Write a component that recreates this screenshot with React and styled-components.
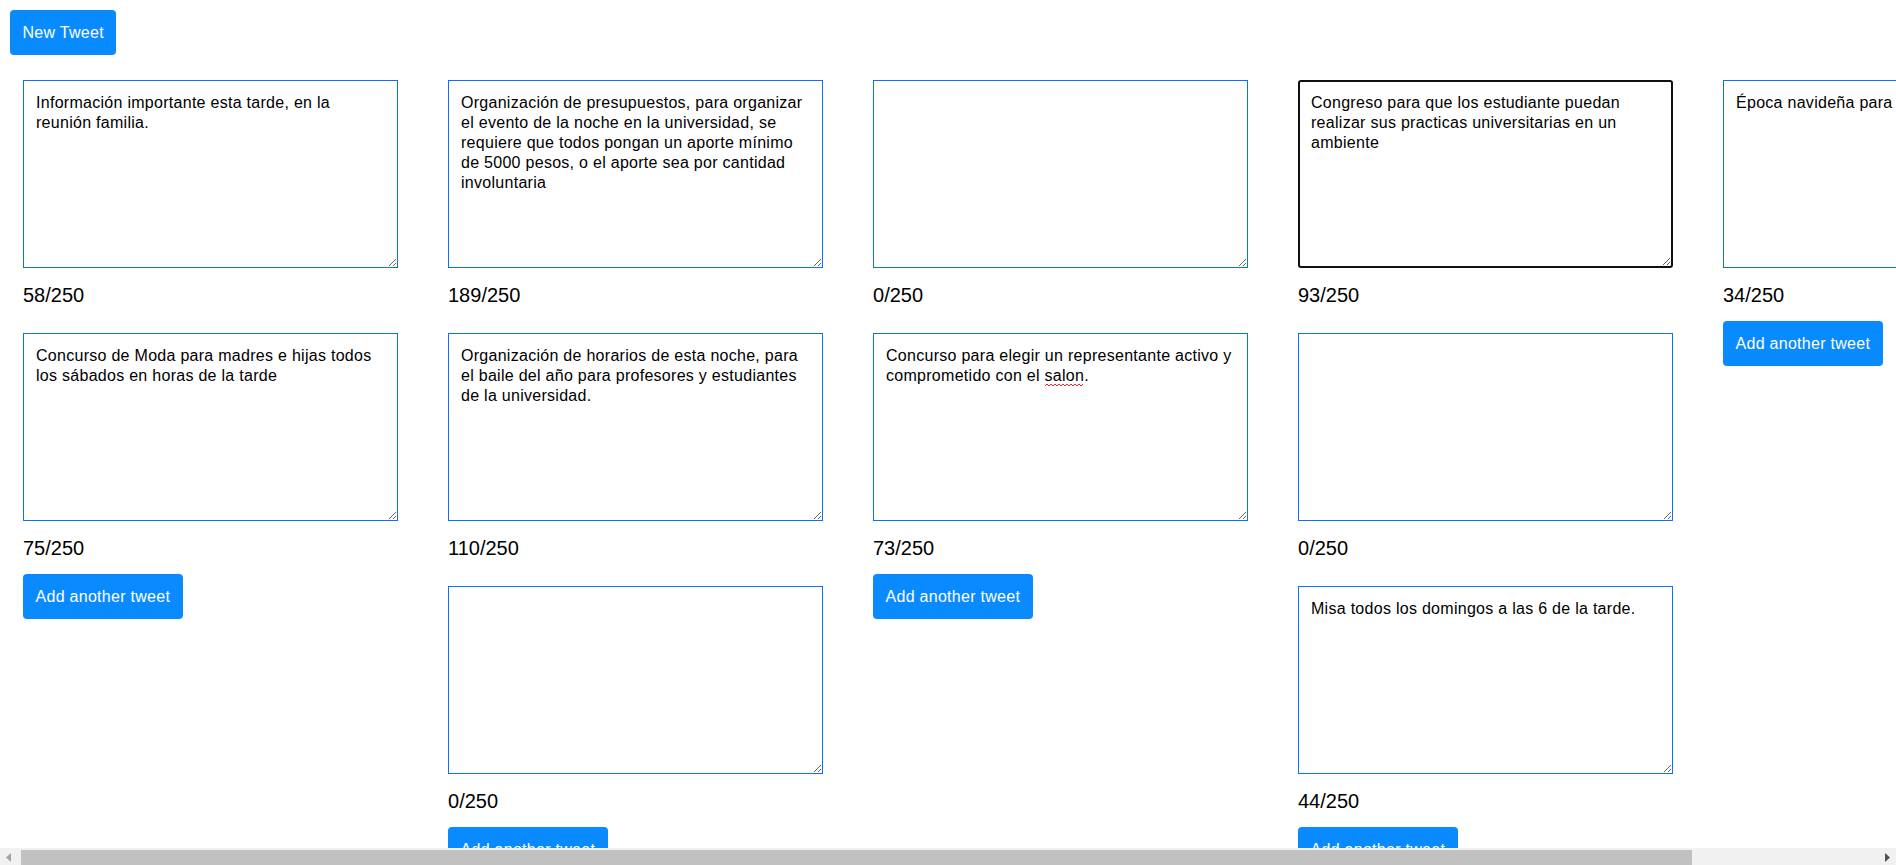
import { useLayoutEffect, useRef, useState } from "react";
import styled, { createGlobalStyle, css } from "styled-components";

const GlobalStyle = createGlobalStyle`
  html, body {
    margin: 0;
    height: 100%;
  }
  body {
    font-family: "Liberation Sans", Arial, sans-serif;
    background-color: #ffffff;
    color: #000000;
    overflow: hidden;
  }
  #root {
    height: 100%;
  }
`;

const Page = styled.div`
  height: 100vh;
  display: flex;
  flex-direction: column;
`;
const Header = styled.header`
  flex: none;
  padding: 10px 10px 0;
  display: flex;
`;
const BlueButton = styled.button`
  flex: none;
  height: 45px;
  padding: 0 12.5px;
  border: none;
  border-radius: 4px;
  background-color: #0a8aff;
  color: #ffffff;
  font-family: "Liberation Sans", Arial, sans-serif;
  font-size: 16px;
  letter-spacing: 0.28px;
  white-space: nowrap;
  cursor: pointer;
`;
const Board = styled.main`
  flex: 1;
  min-height: 0;
  display: flex;
  align-items: flex-start;
  gap: 50px;
  padding: 25px 10px 0 23px;
  overflow-x: auto;
  overflow-y: hidden;
  scrollbar-width: none;

  &::-webkit-scrollbar {
    display: none;
  }
`;
const ScrollBar = styled.div`
  flex: none;
  height: 17px;
  display: flex;
  background-color: #f1f1f1;
`;
const ScrollArrow = styled.div`
  flex: none;
  width: 17px;
  display: flex;
  align-items: center;
  justify-content: center;
  padding-top: 2px;
  color: ${({ $disabled }) => ($disabled ? "#a3a3a3" : "#505050")};
`;
const ScrollTrack = styled.div`
  flex: 1;
  min-width: 0;
  display: flex;
  padding-left: 4px;
`;
const ScrollThumb = styled.div`
  height: 15px;
  margin-top: 2px;
  background-color: #c1c1c1;
`;
const Column = styled.section`
  flex: none;
  width: 375px;
  display: flex;
  flex-direction: column;
  align-items: flex-start;
`;
const Card = styled.div`
  position: relative;
  width: 100%;

  & + & {
    margin-top: 12px;
  }
`;
const TweetInput = styled.textarea`
  display: block;
  box-sizing: border-box;
  width: 375px;
  height: 188px;
  margin: 0;
  padding: 12px;
  border: 1px solid #0d6efd;
  border-radius: 0;
  background-color: #ffffff;
  color: #000000;
  font-family: "Liberation Sans", Arial, sans-serif;
  font-size: 16px;
  line-height: 20px;
  letter-spacing: 0.28px;
  outline: none;
  resize: both;

  ${({ $focused }) =>
    $focused &&
    css`
      border: 2px solid #101010;
      border-radius: 3px;
      padding: 11px;
    `}
`;
const Counter = styled.p`
  margin: 16px 0 14px;
  font-size: 20px;
  line-height: 23px;
`;
const Squiggle = styled.svg`
  position: absolute;
  left: ${({ $left }) => $left}px;
  top: ${({ $top }) => $top}px;
  pointer-events: none;
`;

// zigzag under a misspelled word, like the browser's spell check
const SpellMark = ({ left, top, width }) => {
  let d = "M0 3";
  for (let x = 2; x <= width; x += 2) {
    d += ` L${x} ${(x / 2) % 2 === 1 ? 1 : 3}`;
  }
  return (
    <Squiggle $left={left} $top={top} width={width} height={4} viewBox={`0 0 ${width} 4`}>
      <path d={d} fill="none" stroke="#e5272d" strokeWidth="1" />
    </Squiggle>
  );
};

const Arrow = ({ dir }) => (
  <svg width="5" height="9" viewBox="0 0 5 9">
    <polygon
      points={dir === "left" ? "5,0 0,4.5 5,9" : "0,0 5,4.5 0,9"}
      fill="currentColor"
    />
  </svg>
);

const initialColumns = [
  [
    { text: "Información importante esta tarde, en la reunión familia. " },
    { text: "Concurso de Moda para madres e hijas todos los sábados en horas de la tarde" },
  ],
  [
    {
      text: "Organización de presupuestos, para organizar el evento de la noche en la universidad, se requiere que todos pongan un aporte mínimo de 5000 pesos, o el aporte sea por cantidad involuntaria ",
    },
    {
      text: "Organización de horarios de esta noche, para el baile del año para profesores y estudiantes de la universidad.",
    },
    { text: "" },
  ],
  [
    { text: "" },
    {
      text: "Concurso para elegir un representante activo y comprometido con el salon.",
      mark: { left: 172, top: 50, width: 39 },
    },
  ],
  [
    {
      text: "Congreso para que los estudiante puedan realizar sus practicas universitarias en un ambiente ",
      focused: true,
    },
    { text: "" },
    { text: "Misa todos los domingos a las 6 de la tarde." },
  ],
  [{ text: "Época navideña para el estudiante." }],
];

const MAX_LENGTH = 250;

export default function App() {
  const [columns, setColumns] = useState(initialColumns);
  const [bar, setBar] = useState({ ratio: 0.9, offset: 0, atEnd: false });
  const boardRef = useRef(null);

  const measure = () => {
    const el = boardRef.current;
    if (!el) return;
    setBar({
      ratio: el.clientWidth / el.scrollWidth,
      offset: el.scrollLeft / el.scrollWidth,
      atEnd: el.scrollLeft + el.clientWidth >= el.scrollWidth - 1,
    });
  };

  useLayoutEffect(() => {
    measure();
    window.addEventListener("resize", measure);
    return () => window.removeEventListener("resize", measure);
  }, [columns]);

  const updateTweet = (colIndex, tweetIndex, text) => {
    setColumns((prev) =>
      prev.map((col, c) =>
        c !== colIndex ? col : col.map((t, i) => (i === tweetIndex ? { ...t, text } : t))
      )
    );
  };

  const addColumn = () => setColumns((prev) => [...prev, [{ text: "" }]]);

  const addTweet = (colIndex) =>
    setColumns((prev) =>
      prev.map((col, c) => (c === colIndex ? [...col, { text: "" }] : col))
    );

  const scrollBy = (dx) => boardRef.current?.scrollBy({ left: dx });

  return (
    <>
      <GlobalStyle />
      <Page>
        <Header>
          <BlueButton onClick={addColumn}>New Tweet</BlueButton>
        </Header>
        <Board ref={boardRef} onScroll={measure}>
          {columns.map((tweets, c) => (
            <Column key={c}>
              {tweets.map((tweet, i) => (
                <Card key={i}>
                  <TweetInput
                    value={tweet.text}
                    maxLength={MAX_LENGTH}
                    spellCheck={false}
                    $focused={tweet.focused}
                    onChange={(e) => updateTweet(c, i, e.target.value)}
                  />
                  {tweet.mark && <SpellMark {...tweet.mark} />}
                  <Counter>
                    {tweet.text.length}/{MAX_LENGTH}
                  </Counter>
                </Card>
              ))}
              <BlueButton onClick={() => addTweet(c)}>Add another tweet</BlueButton>
            </Column>
          ))}
        </Board>
        {bar.ratio < 1 && (
          <ScrollBar>
            <ScrollArrow $disabled={bar.offset === 0} onClick={() => scrollBy(-40)}>
              <Arrow dir="left" />
            </ScrollArrow>
            <ScrollTrack>
              <ScrollThumb
                style={{ width: `${bar.ratio * 100}%`, marginLeft: `${bar.offset * 100}%` }}
              />
            </ScrollTrack>
            <ScrollArrow $disabled={bar.atEnd} onClick={() => scrollBy(40)}>
              <Arrow dir="right" />
            </ScrollArrow>
          </ScrollBar>
        )}
      </Page>
    </>
  );
}
